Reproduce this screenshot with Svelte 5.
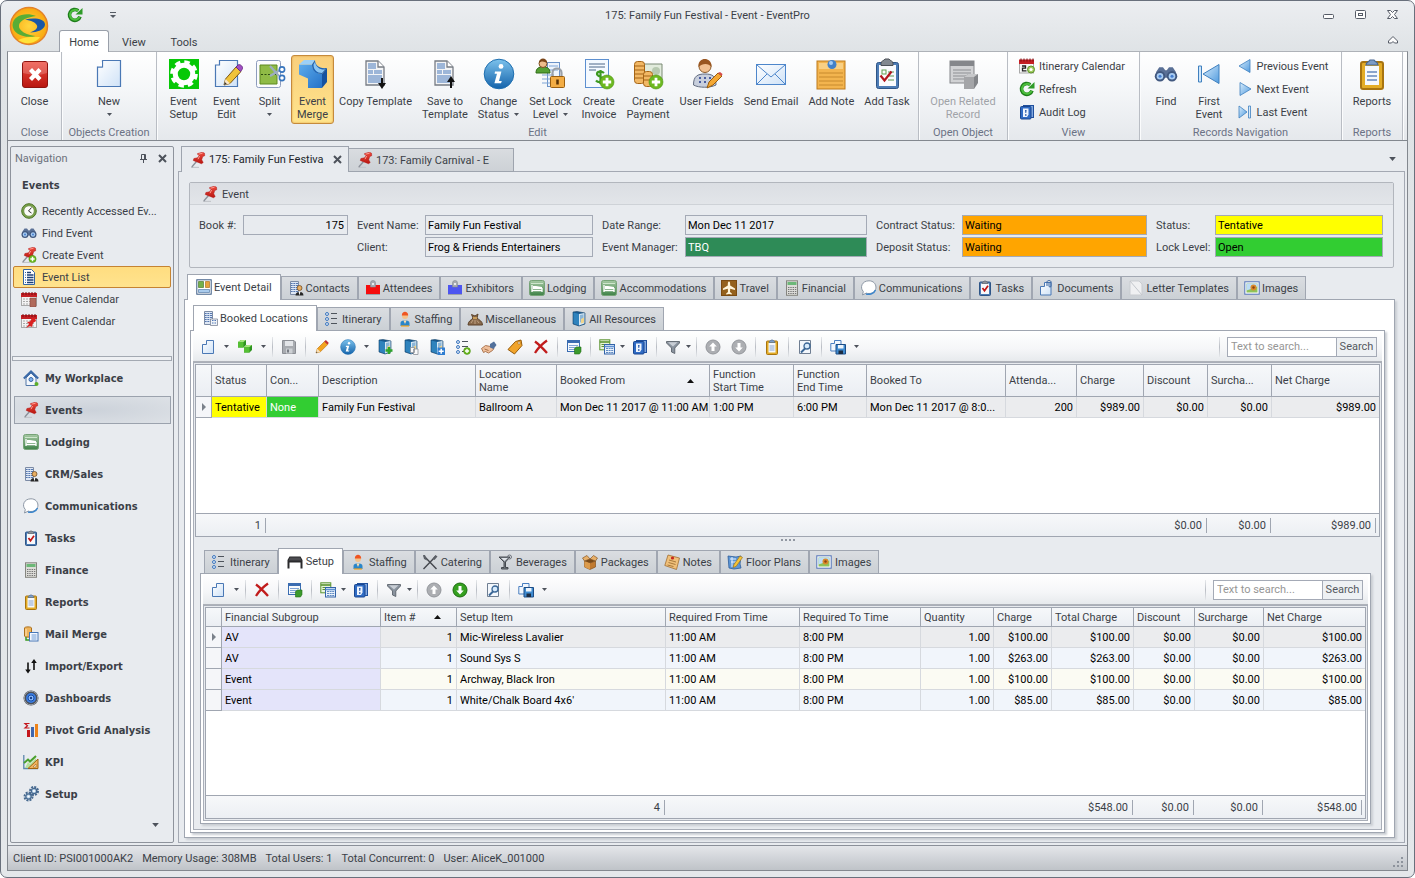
<script>
  const page = (x, y, w, h) =>
    `<path d="M${x + 4} ${y}H${x + w}V${y + h}H${x}V${y + 4}H${x + 4}Z" fill="url(#g-paper)" stroke="#4a78b5"/>`;
  const plus = (x, y, r, c = '#6cb820') =>
    `<circle cx="${x}" cy="${y}" r="${r}" fill="${c}" stroke="#4c9412" stroke-width=".6"/><path d="M${x - r * 0.6} ${y}H${x + r * 0.6}M${x} ${y - r * 0.6}V${y + r * 0.6}" stroke="#fff" stroke-width="${r * 0.4}"/>`;
  const pin =
    '<path d="M1 15.500h8" stroke="#c3c6cb" stroke-width="1.400"/><path d="M6.500 9.500L1.800 15" stroke="#8b9099" stroke-width="1.300"/><path d="M7.500 1.600l5-1.400 2 1 .2 2.500-2 .8-1 3.300 1.500 2.700-1.700 1.200-8.200-3.200.6-2 3.600-.7 1.800-2.600-1.500-.5z" fill="url(#g-red)" stroke="#b01212" stroke-width=".5"/><path d="M8.500 2.200l4-1M9.600 4L8 7.200" stroke="#ff9c90" fill="none"/>';
  const calendar =
    '<rect x=".5" y="2.500" width="15" height="12" fill="#f3f3f3" stroke="#a9a9a9"/><path d="M0 2h16v4H0z" fill="#c41f24"/><path d="M2 1v3M5 1v3M8 1v3M11 1v3M14 1v3" stroke="#7a0d10"/><path d="M2 8h12M2 10.500h12M2 13h12" stroke="#aaa" stroke-dasharray="2 1"/>';
  const book =
    '<path d="M2 1l4-.5 8 1.500v11l-6 2-6-2z" fill="#1b5c92" stroke="#0f3f68" stroke-width=".6"/><path d="M2.500 1.500L8 3v11.500L2.500 12.500z" fill="#2f83bd"/><path d="M8 3l5.500-1v10.500L8 14.500z" fill="#d9e8f3"/><path d="M9 4l3.500-.8v4L9 12z" fill="#8bb6d8"/><path d="M10 8l3-1.500v5L10 12.500z" fill="#f0d48a"/>';
  const bullets =
    '<g fill="#dbe8f7" stroke="#3f78bf"><circle cx="3" cy="3" r="1.500"/><circle cx="3" cy="8" r="1.500"/><circle cx="3" cy="13" r="1.500"/></g><path d="M7 2.500h6M7 7.500h6M7 12.500h6" stroke="#4e545c"/>';
  const tower =
    '<path d="M2.500 1.500h8v13h-8z" fill="#dfe8f5" stroke="#7c8ba5"/><path d="M3 3.500h7M3 5.500h7M3 7.500h7M3 9.500h7M3 11.500h7" stroke="#5577b0"/><path d="M5 2v12M7.500 2v12" stroke="#dfe8f5" stroke-width=".7"/>';
  const clip =
    '<rect x="2.500" y="2" width="11" height="13.500" rx="1" fill="#e3ac26" stroke="#a87410"/><rect x="4.500" y="4" width="7" height="9.500" fill="#f5f8fc"/><path d="M5.500 7h5M5.500 9h5M5.500 11h5" stroke="#8aa4cc"/><path d="M5 3.500c0-1.500 1.500-1.500 2-2.500h2c.5 1 2 1 2 2.500z" fill="#7c9cc6" stroke="#49678f" stroke-width=".6"/>';
  const task =
    '<rect x="2.500" y="2" width="11" height="13.500" rx="1" fill="#4d7cb5" stroke="#2e5587"/><rect x="4" y="3.500" width="8" height="10.500" fill="#f8f9fb"/><path d="M5.500 8l2 2.800 3.500-5" fill="none" stroke="#c01616" stroke-width="1.700"/><path d="M5 3.500c0-1.500 1.500-1.500 2-2.500h2c.5 1 2 1 2 2.500z" fill="#8d929a" stroke="#565c65" stroke-width=".6"/>';
  const binoculars =
    '<path d="M1.500 6.500l2-3h2.500l1.500 2h1l1.500-2h2.500l2 3v4h-13z" fill="#5a7096"/><circle cx="4" cy="9.500" r="3.500" fill="#41587f"/><circle cx="12" cy="9.500" r="3.500" fill="#41587f"/><circle cx="4" cy="9.500" r="2.200" fill="#a9cdf3"/><circle cx="12" cy="9.500" r="2.200" fill="#a9cdf3"/><circle cx="4" cy="9.500" r="1" fill="#477fd0"/><circle cx="12" cy="9.500" r="1" fill="#477fd0"/>';
  const tableSheet = (c) =>
    `<rect x="1.500" y="1.500" width="12" height="11" fill="#f6f9fd" stroke="${c}"/><path d="M1 1h13v3H1z" fill="${c}"/><path d="M3 6.500h9M3 8.500h9M3 10.500h9" stroke="#7fa3d4"/>`;
  const badge = (c) =>
    `<path d="M1 5h14v9H1z" fill="${c}"/><path d="M1 14.500h14" stroke="#9da2aa"/><path d="M5.500 7V3a2.500 2.500 0 015 0v4z" fill="#a7abb2" stroke="#858b94" stroke-width=".6"/><circle cx="8" cy="4" r="1" fill="#fff"/>`;
  const bed =
    '<rect x=".5" y=".5" width="15" height="15" rx="2" fill="url(#g-bed)" stroke="#76a377"/><path d="M3 5v7M3 10.500h10M13 8v4" stroke="#fff" stroke-width="1.300"/><path d="M4 6h3l6 1v2H4z" fill="#fff"/><path d="M2 3.500h12" stroke="#cfe6cd"/>';
  const arrow = (d, a, b) =>
    `<circle cx="8" cy="8" r="7" fill="${a}" stroke="${b}"/><path d="${d}" fill="#fff"/>`;
  const up = 'M8 3.500l3.800 4h-2.300v4.500h-3V7.500H4.200z';
  const down = 'M8 12.500l3.800-4h-2.300V4h-3v4.500H4.200z';
  const info =
    '<circle cx="8" cy="8" r="7.400" fill="url(#g-info)" stroke="#1f6fb0" stroke-width=".5"/><circle cx="9" cy="4.200" r="1.200" fill="#fff"/><path d="M6 6.800h3.200L8 11.500h1.400l-.4 1.100H5.700l1.300-4.700H5.800z" fill="#fff"/>';
  const funnel =
    '<path d="M1.500 2.500h13v1.500L9.800 9v5.500L6.500 13V9L1.500 4z" fill="#8b949f" stroke="#505861" stroke-width=".8"/><path d="M3 3.300h9.500L8 7.500z" fill="#c9ced5"/>';
  const audit =
    '<rect x="4.500" y="1.500" width="10" height="12" fill="#7fa7e0" stroke="#1f4f9d"/><rect x="1.500" y="2.500" width="10.500" height="12.500" rx="1" fill="#2f6bc4" stroke="#1a4790"/><path d="M4 4.500h5.500v6L8 13H4z" fill="#eef4fd"/><path d="M6 6h1.600l-.4 3h-.8zM6 10.200h1.500v1.500H6z" fill="#2457a8"/>';
  const refresh =
    '<path d="M13 9.600A5.400 5.400 0 1111.200 3.700" fill="none" stroke="#1d7d1a" stroke-width="3.600"/><path d="M12.600 9.800A5 5 0 1111.200 4" fill="none" stroke="#4cbf3c" stroke-width="2"/><path d="M15.500 1v6.500H8.500z" fill="#2e9b28"/>';
  const picture =
    '<rect x=".8" y="1.800" width="14.400" height="12.400" fill="#fff" stroke="#5273b8"/><path d="M2.500 3.500h11v9h-11z" fill="#8fc35a"/><path d="M2.500 3.500h11v3l-5 2-6 2z" fill="#bcdcf7"/><circle cx="9.500" cy="7.500" r="3" fill="#d98a2b"/><circle cx="9.500" cy="7.500" r="1.200" fill="#8a4312"/>';
  const person =
    '<circle cx="8" cy="5" r="3" fill="#f4c28a"/><path d="M4.800 4.500c0-5 6.400-5 6.400 0z" fill="#ef5522"/><path d="M3.500 15v-3c0-2 2-2.500 4.500-2.500s4.500.5 4.500 2.500v3z" fill="#2a86c9"/><path d="M6.500 9.500h3L8 13z" fill="#ffe0b0"/><path d="M4 15h8" stroke="#f8a51b" stroke-width="1.200"/>';
  const pencil =
    '<path d="M2 14l1.200-4.200L10.500 2.500l3.200 3L6.400 12.800z" fill="#f3a41f" stroke="#b96e0d" stroke-width=".6"/><path d="M10.300 2.600l1.600-1.500 3 2.900-1.500 1.500z" fill="#c33333"/><path d="M3.200 9.800l3.200 3L2 14z" fill="#f6dfb8"/><path d="M2 14l.5-1.500 1 1z" fill="#333"/>';
  const gear =
    '<g fill="none" stroke="#46698f"><circle cx="5.500" cy="10.500" r="4" stroke-width="2" stroke-dasharray="2 1.100"/><circle cx="5.500" cy="10.500" r="2.700" fill="#b7cfe6" stroke-width="1.200"/><circle cx="11" cy="5" r="4" stroke-width="2" stroke-dasharray="2 1.100"/><circle cx="11" cy="5" r="2.700" fill="#b7cfe6" stroke-width="1.200"/></g><circle cx="5.500" cy="10.500" r="1.100" fill="#fff"/><circle cx="11" cy="5" r="1.100" fill="#fff"/>';
  const cube = (x, y) =>
    `<path d="M${x} ${y + 2}l3-2h5v5l-2.500 2.500H${x}z" fill="#2e9420"/><path d="M${x} ${y + 2}l3-2h5l-2.500 2z" fill="#a6e57f"/><path d="M${x} ${y + 2}h5.500v5.500H${x}z" fill="#55bf34"/>`;

  const icons = {
    pin,
    clock: '<circle cx="8" cy="8" r="7.300" fill="#7ba34c" stroke="#4d7426"/><circle cx="8" cy="8" r="5.200" fill="#fbfcf8" stroke="#5a7f34" stroke-width=".6"/><path d="M10.500 4.500L7.500 8l3 2" fill="none" stroke="#333"/>',
    binoculars,
    pinAdd: pin + plus(11.5, 12, 3.6),
    list: '<path d="M2.500.5h8l3 3v12h-11z" fill="#fff" stroke="#3465a4"/><path d="M4 3.500h1M4 6h1M4 8.500h1M4 11h1M4 13.500h1" stroke="#3465a4"/><path d="M6 3.500h4M6 6h6.500M6 8.500h6.500M6 11h6.500M6 13.500h6.500" stroke="#1c3f77" stroke-width="1.300"/>',
    calVenue: calendar + '<path d="M9 7h6v9H9z" fill="#b06a5c" stroke="#7d4338" stroke-width=".5"/>',
    calEvent: calendar + '<path d="M5 15l3-4-2-2 3-.5 2-3.500h3l1 3-3 2-1 4-2-1z" fill="#d92020"/>',
    home: '<path d="M3 8v7.500h10V8L8 3z" fill="#f3f7fc" stroke="#5277a8"/><path d="M.8 8.500L8 1.500l7.200 7" fill="none" stroke="#3b6aa8" stroke-width="2"/><circle cx="8" cy="9.500" r="2" fill="#7db2ee" stroke="#3866a6"/><circle cx="13.500" cy="14" r="2" fill="#5eaf2a"/>',
    bed,
    crm: tower + '<circle cx="11.500" cy="8" r="2.500" fill="#e8ae62" stroke="#664018" stroke-width=".7"/><path d="M7.500 15.500c0-5 8-5 8 0z" fill="#262626"/><path d="M10.500 11.500h2l-1 4z" fill="#fff"/>',
    chat: '<path d="M8 .8c9 0 9.500 12.700 0 12.700-1 0-2 0-2.800-.4L1.500 15l.8-3.500C-1.500 7.500 1 .8 8 .8z" fill="#fff" stroke="#8d97a5"/><path d="M5 14c3.500.8 8-.2 9.500-4" fill="none" stroke="#3c86cc" stroke-width="1.500"/>',
    task,
    calc: '<rect x="2.500" y=".8" width="11" height="14.500" fill="#dcdcd8" stroke="#85857f"/><path d="M3.500 2h9v3h-9z" fill="#6cb878"/><path d="M4 7.500h8.500M4 9.500h8.500M4 11.500h8.500M4 13.500h8.500" stroke="#777" stroke-dasharray="1.400 .9"/>',
    clip,
    mailMerge: '<path d="M1.500 2c0-1.500 7-1.500 7 0v8c0 1.500-7 1.500-7 0z" fill="#efb45c" stroke="#ad701c"/><path d="M3 3v7" stroke="#fde6bc"/><rect x="6.500" y="6.500" width="8.500" height="8.500" fill="#f5f9ff" stroke="#4878b8"/><path d="M8.500 9h5M8.500 11h5M8.500 13h5" stroke="#6f9bd3"/><path d="M3 11v3h3" stroke="#389b22" fill="none" stroke-width="1.500"/>',
    importExport: '<path d="M5 4.500v9M11 12V3" stroke="#111" stroke-width="1.600"/><path d="M2.200 11.500h5.600L5 15.500zM8.200 5h5.600L11 1z" fill="#111"/>',
    dashboard: '<circle cx="8" cy="8" r="7.500" fill="#4c5057"/><circle cx="8" cy="8" r="6.800" fill="none" stroke="#9fa4ad"/><circle cx="8" cy="8" r="5" fill="#3a7be0"/><circle cx="8" cy="8" r="3" fill="#8cbcff" stroke="#194fa5"/><circle cx="8" cy="8" r="1.200" fill="#17418f"/>',
    pivot: '<path d="M6.500 1.500H2l2.500 2.200L2 6h4.500" fill="none" stroke="#c4161c" stroke-width="1.200"/><path d="M4 8h3v7H4z" fill="#c4161c"/><path d="M8 5h3v10H8z" fill="#3f66ad"/><path d="M12 2h3v13h-3z" fill="#ee8319"/>',
    kpi: '<path d="M.8 1v13.500H15" stroke="#5d88ad" fill="none" stroke-width="1.300"/><path d="M1 9l4-3.500 2 2L13 2" stroke="#49a02b" stroke-width="2" fill="none"/><path d="M2 14l3-6 2 2 6-6v10z" fill="#b6e09a"/><path d="M5 14.500L15 5v9.500z" fill="#efb35f" stroke="#9f6410"/><path d="M10 13l3-3v3z" fill="#fff" stroke="#9f6410" stroke-width=".6"/>',
    gear,
    detail: '<rect x=".8" y=".8" width="14.400" height="14.400" fill="#fff" stroke="#3a5a84"/><path d="M2.500 2.500h5v6h-5z" fill="#74b04a" stroke="#3b6d1f" stroke-width=".6"/><path d="M9.500 2.500h4v6h-4z" fill="#e7a23a" stroke="#a2600f" stroke-width=".6"/><path d="M2.500 10.500h11v3h-11z" fill="#a9cbed" stroke="#41699b" stroke-width=".6"/>',
    badgeRed: badge('#f60d0d'),
    badgeBlue: badge('#4d55f0'),
    plane: '<rect width="16" height="16" fill="#7a4b12"/><path d="M1 1h14v14H1z" fill="#94611d"/><path d="M8 1.500c1 0 1.200 1.500 1.200 4L14 8.500V10l-4.800-1.300L9 12l1.800 1.500v1L8 14l-2.800.5v-1L7 12l-.2-3.300L2 10V8.500l4.800-3c0-2.500.2-4 1.200-4z" fill="#fff6dc"/>',
    documents: page(1.5, 2.5, 10.5, 12.5) + '<path d="M8 6V2c0-2 4-2 4 0v4c0 1.500-2 1.500-2 0V2.500" fill="none" stroke="#35619e"/>',
    letter: '<path d="M2 1h9l3 3v11H2z" fill="#eff0f2" stroke="#c9ccd1"/><path d="M2 1l12 14" stroke="#c3c7cd"/>',
    image: picture,
    building: tower + '<path d="M8.500 9h7v6.500h-7z" fill="#f0f3f7" stroke="#7e8799" stroke-width=".8"/><path d="M10 10.500h4.500M10 13h4.500" stroke="#4d75b7" stroke-dasharray="1.500 1"/>',
    bullets,
    person,
    bag: '<path d="M1 14c0-4 3.500-5 5-7L4.500 3.500 8 5l3-2-1 4c2 2 5.500 3 5.500 7z" fill="#8a6b4c" stroke="#5c432b"/><path d="M4 12l2-3M8 13V9M12 12l-2-2.500" stroke="#bfa183"/><path d="M6 7h4" stroke="#e0b060" stroke-width="1.500"/>',
    book,
    page: page(2.5, 1.5, 11, 13),
    cubes: cube(1, 1) + cube(7, 6),
    save: '<path d="M1.500 1.500h11.500l1.500 1.500v11.500h-13z" fill="#a8abb0" stroke="#8b8e94"/><path d="M4 2h8v5H4z" fill="#e3e5e8"/><path d="M5 9.500h6.500v5H5z" fill="#cdd0d4"/><path d="M6 10.500h2v3H6z" fill="#777b82"/>',
    pencil,
    info,
    bookAdd: book + '<path d="M8.500 11.500h7M12 8v7" stroke="#2fa52b" stroke-width="2.600"/>',
    bookCopy: book + '<path d="M7.500 8.500h4v5h-4zM10.500 10h4.500v5.500h-4.500z" fill="#fafafa" stroke="#8a8f98" stroke-width=".8"/>',
    bookPlus: book + '<rect x="8.500" y="8.500" width="7.500" height="7.500" fill="#2e7dd1"/><path d="M9.700 12.200h5M12.200 9.700v5" stroke="#fff" stroke-width="1.500"/>',
    bulletsAdd: bullets + plus(12, 12, 3.4),
    hands: '<path d="M.5 9.500l4-3 5 1 3.500 2-1.500 2-4 2.500-3-1.500-2 1z" fill="#f0c09c" stroke="#9a6038" stroke-width=".8"/><path d="M9 5l4-2.500 2.500 3.500-3 4-3.500-1.500z" fill="#52719c"/><path d="M3.500 10l4 1.500" stroke="#a36b43"/>',
    tag: '<path d="M1 10.500L8.500 2.500l5.500-1.500 1 5.500L7.500 15z" fill="#f1a42b" stroke="#965b0a"/><circle cx="12" cy="4" r="1.200" fill="#fff" stroke="#965b0a" stroke-width=".6"/>',
    remove: '<path d="M2 2.500c4 3 8 7 12 11.500M14 1.500C9 5 5 9 2 14" fill="none" stroke="#c11c1c" stroke-width="2.300"/>',
    tableGreen: tableSheet('#3a6cb1') + '<path d="M8.500 9.500l2-1.500H15v4.500L13.500 15h-5z" fill="#3b9a2c" stroke="#246e18" stroke-width=".6"/>',
    sheets: '<rect x=".8" y=".8" width="10" height="10" fill="#e8f3dc" stroke="#5b9431"/><path d="M.8 3h10" stroke="#5b9431" stroke-width="1.600"/><path d="M2.500 5.500H5M2.500 7.500H5" stroke="#5b9431"/><rect x="5.500" y="5.500" width="10" height="9.500" fill="#eaf2fc" stroke="#3263a8"/><path d="M5.500 7.500h10" stroke="#5d8fd3" stroke-width="1.600"/><path d="M7 9.500h7.500M7 11.500h7.500M7 13.500h7.500" stroke="#5f8ac2" stroke-dasharray="2 .6"/>',
    audit,
    funnel,
    upGrey: arrow(up, '#acaeb2', '#93969b'),
    downGrey: arrow(down, '#acaeb2', '#93969b'),
    downGreen: arrow(down, '#35a020', '#1c6d10'),
    preview: '<path d="M2.500 1.500h11v13h-11z" fill="#f3f7fc" stroke="#6f7e92"/><circle cx="10" cy="7" r="3" fill="#d8ebfc" stroke="#3b6797" stroke-width="1.300"/><path d="M8 9.500l-4 4" stroke="#3b6797" stroke-width="2"/>',
    exportIt: '<path d="M4.500 1.500H11V12H.8V4.500h3.700z" fill="#f2f7fd" stroke="#4a7fc0"/><path d="M6 5.500h9.500v9.500H6z" fill="#3f8bd0" stroke="#1d4d86"/><path d="M8 6h5.500v3.500H8z" fill="#eef5fc"/><path d="M8.500 11.500H13V15H8.500z" fill="#1c2d44"/>',
    furniture: '<path d="M2.500 3.500h11l2 3.500v8.500h-2v-6h-11v6h-2V7z" fill="#2a2a2c"/><path d="M3 4.500h10l1.500 3H1.500z" fill="#4c4c50"/>',
    catering: '<path d="M2 2l12.500 13M14 2L1.500 15" stroke="#45484e" stroke-width="1.400"/><path d="M1 1l1 4 3 1.500L3 1zM15.500 2.500l-3 3.500-2-1.500L13.500 1z" fill="#5c6067"/>',
    beverage: '<path d="M2 3h11L8.500 8v5.500h2.500V15H4.500v-1.500H7V8z" fill="#7e848c" stroke="#3a3e44" stroke-width=".9"/><path d="M4 4h7L7.500 7z" fill="#dfe3e8"/><circle cx="12.500" cy="3" r="2" fill="none" stroke="#6d737c"/>',
    box: '<path d="M2.500 7L8 9l5.500-2v6L8 15.500 2.500 13z" fill="#c07a30" stroke="#7a4711" stroke-width=".6"/><path d="M2.500 7L8 9v6.500L2.500 13z" fill="#dc9b4c"/><path d="M8 5L5 1.500.5 4 2.500 7zM8 5l3.500-3.500L15.500 4l-2 3z" fill="#e7b06a" stroke="#7a4711" stroke-width=".6"/><path d="M2.500 7L8 5l5.500 2L8 9z" fill="#7b4a17"/>',
    note: '<path d="M4 1l11.500 3-3 11.500L.8 11.500z" fill="#f0c07a" stroke="#996322" stroke-width=".7"/><path d="M5 6l7 2M4.500 8.500l7 2M3.500 11l6 1.500" stroke="#a87a3c"/><circle cx="8.500" cy="4" r="1.600" fill="#c8271c"/>',
    floor: '<path d="M1 2l8 1 5-1-1 8 1 4-7 1-5-1z" fill="#5e97d6" stroke="#2b5c9b" stroke-width=".8"/><path d="M3 5h6M4 8h5M5 3v10" stroke="#e3effc"/><path d="M6 13.500l1-3L13 2l2.500 1.500-6.500 9z" fill="#f5c43a" stroke="#9a6d0c" stroke-width=".6"/>',
    refresh,
    calItin: '<rect x=".5" y="2.500" width="14" height="12.500" fill="#f6f6f6" stroke="#a9a9a9"/><path d="M0 1.500h15v4.500H0z" fill="#c41f24"/><path d="M2 .5v3M5 .5v3M8 .5v3M11 .5v3M14 .5v3" stroke="#7a0d10"/><path d="M3 8h3.500v2.200H3.500v2.600H7.500" fill="none" stroke="#222" stroke-width="1.300"/><circle cx="12" cy="11.500" r="3.500" fill="#a2cc62" stroke="#5e932a"/><circle cx="12" cy="11.500" r="1.600" fill="#fff"/>',
    prev: '<path d="M13 1.500v13L2 8z" fill="url(#g-sky)" stroke="#3f80bf" stroke-width=".8"/>',
    next: '<path d="M3 1.500v13L14 8z" fill="url(#g-sky)" stroke="#3f80bf" stroke-width=".8"/>',
    last: '<path d="M2 2v12l8-6z" fill="url(#g-sky)" stroke="#3f80bf" stroke-width=".8"/><path d="M11.500 2h2v12h-2z" fill="#d5e9fb" stroke="#3f80bf" stroke-width=".8"/>',
  };

  const sheet = (x, y) =>
    `<path d="M${x} ${y}h12l6 6v18h-18z" fill="#f3f4f6" stroke="#777c84" stroke-width="1.300"/><path d="M${x + 12} ${y}v6h6" fill="#fff" stroke="#777c84" stroke-width="1.300"/><path d="M${x + 2} ${y + 2}h8v6h-8zM${x + 2} ${y + 9}h5v4h-5zM${x + 8} ${y + 9}h8v4h-8zM${x + 2} ${y + 14}h14v8h-14z" fill="#9db6d8"/>`;
  const dollar =
    '<path d="M21 15c-2-2-7-2-7 1s7 2.500 7 5.500-6 3.500-8 1M17.500 12v14" fill="none" stroke="#3d9a22" stroke-width="2.200"/>';
  const big = {
    close: '<rect x="3.500" y="3.500" width="25" height="26" rx="2.500" fill="url(#g-red)" stroke="#8e1410"/><path d="M4 4h24v11c-8 3-16 2-24 0z" fill="#fff" opacity=".2"/><path d="M11.500 11.500l9.500 10M21 11.500l-9.500 10" stroke="#fff" stroke-width="4.200"/>',
    page: '<path d="M9.500 2.500h18v26h-23V9h5z" fill="url(#g-paper)" stroke="#4a78b5" stroke-width="1.200"/><path d="M9.500 2.500V9h-5" fill="#fff" stroke="#4a78b5"/>',
    setup: '<path d="M1 1h30v30H1z" fill="#06c806"/><circle cx="16" cy="16" r="12" fill="none" stroke="#fff" stroke-width="3.600" stroke-dasharray="5.400 4.020"/><circle cx="16" cy="16" r="8.700" fill="none" stroke="#fff" stroke-width="5"/>',
    edit: '<path d="M8.500 2.500h18v26h-22V7h4z" fill="url(#g-paper)" stroke="#4a78b5" stroke-width="1.200"/><path d="M13 27l1.500-6L25 9l5 4.500L19 25.500z" fill="#f0c33a" stroke="#7e5712"/><path d="M25 9l2-2c2-1.500 6 2 4 4.500l-1.500 2z" fill="#a14ec2" stroke="#6b2d88"/><path d="M13 27l1.500-6 4.500 4.500z" fill="#f9e6c5"/><path d="M13 27l.8-3 2 2z" fill="#333"/>',
    split: '<rect x="2.500" y="2.500" width="24" height="27" rx="2" fill="#fbfcfd" stroke="#8d9cbd"/><path d="M6 7h17v19H6z" fill="#8fbb46" stroke="#5e8a21"/><path d="M7 16.500h15" stroke="#2c4e10" stroke-dasharray="2 1.500"/><path d="M16 8l9 10M16 18l10-6" stroke="#9cadc0" stroke-width="2.200"/><circle cx="28" cy="11.500" r="2.600" fill="#fff" stroke="#3775bd" stroke-width="1.600"/><circle cx="28" cy="20" r="2.600" fill="#fff" stroke="#3775bd" stroke-width="1.600"/>',
    merge: '<path d="M2 6.500h13c0 5 3 9 10 9.500v14H11v-9.500L2 16.500z" fill="url(#g-blue)"/><path d="M2 6.500L7 2h11l-3 4.500z" fill="#9bd0f8"/><path d="M15 6.500L18 2c0 5 4 9 12 8l-5 6c-7 0-10-4-10-9.500z" fill="#1e63b5"/><path d="M16.500 6.500L18 4c1 5 5 8 10 7.500L25 15c-5 0-8.500-3-8.500-8.500z" fill="#8cc6f3"/><path d="M25 16l5-6v14l-5 6z" fill="#1552a0"/>',
    copy: sheet(6, 3) + '<path d="M22 20v7" stroke="#111" stroke-width="2"/><path d="M18 25h8l-4 6z" fill="#111"/>',
    saveTo: sheet(6, 3) + '<path d="M22 22v8" stroke="#111" stroke-width="2"/><path d="M18 24h8l-4-6z" fill="#111"/>',
    info: `<g transform="scale(2)">${info}</g>`,
    lock: '<rect x="13.500" y="4.500" width="12" height="24" fill="#eef4fc" stroke="#6c93c8"/><path d="M15 8h9M15 12h9M8 17h12M8 21h12M8 25h12" stroke="#7fa5d6"/><path d="M2 15c0-5 3-6 7-6s7 1 7 6z" fill="#55a035" stroke="#2f6c18"/><circle cx="9" cy="5.500" r="4" fill="#edbd8b" stroke="#7e4d20"/><path d="M5 5c0-6 8-6 8 0-3-2-6-2-8 0z" fill="#7a4519"/><path d="M18.500 19v-4c0-6 9-6 9 0v4" fill="none" stroke="#9aa0a8" stroke-width="2.200"/><rect x="16.500" y="18.500" width="14" height="11" rx="1" fill="#f3ad45" stroke="#9a5f10"/><path d="M23.500 21.500v5" stroke="#5b3305" stroke-width="2.500"/>',
    invoice: '<rect x="2.500" y="1.500" width="23" height="28" fill="#f4f9ff" stroke="#5c8fd0"/><path d="M6 6h16M6 9h16M6 12h7" stroke="#4d6688"/>' + dollar + plus(24, 24, 7),
    payment: '<path d="M12 6h18v16H12z" fill="#e1ebdc" stroke="#7b8a74"/><circle cx="24" cy="13" r="4" fill="#b7c9b0"/><g fill="#f2b865" stroke="#a56416"><rect x="2.500" y="3.500" width="10" height="22" rx="3"/><path d="M2.500 8h10M2.500 12h10M2.500 16h10M2.500 20h10"/><rect x="11.500" y="13.500" width="9" height="15" rx="3"/><path d="M11.500 18h9M11.500 22h9"/></g>' + plus(24, 24, 7),
    user: '<circle cx="14" cy="8.500" r="6" fill="#f2c091" stroke="#8a5a2a"/><path d="M7.500 9c-1-11 14-10 13 0-3-4-9-4-13 0z" fill="#9a5620"/><path d="M2.500 27c0-9 4-11 11.500-11s11 2 11 11c-6 3-17 3-22.500 0z" fill="#c8cfdd" stroke="#626c80"/><path d="M8 20h12M8 24h12" stroke="#4a5da0" stroke-width="2" stroke-dasharray="2 3"/><path d="M16 30l2-6 9-9 4 3-9 9z" fill="#f5a833" stroke="#9a5c0d"/><path d="M27 15l2-1 2.500 2-.8 2z" fill="#d54848"/>',
    mail: '<rect x="1.500" y="6.500" width="29" height="20" fill="url(#g-paper)" stroke="#4d86cb"/><path d="M2 7l14 12L30 7M2 26l10-10M30 26L20 16" fill="none" stroke="#4d86cb"/>',
    note: '<rect x="2" y="3" width="28" height="28" fill="#f3b44e" stroke="#bd7a1c"/><path d="M4 5h24v6H4z" fill="#f9d084"/><path d="M4 15h24M4 19h24M4 23h24M4 27h24" stroke="#c88a2c"/><circle cx="17" cy="6.500" r="4.500" fill="#4381c8"/><circle cx="16" cy="5" r="2" fill="#a4ccf5"/>',
    task: '<rect x="5.500" y="4.500" width="22" height="26" rx="2" fill="#4d7cb5" stroke="#2e5587"/><path d="M8 7h17v21H8z" fill="#fafbfd"/><path d="M10 5.500c0-3 3-2.500 4-4.500h4c1 2 4 1.500 4 4.500v2H10z" fill="#82888f" stroke="#4c5158"/><path d="M17 14h6M18 18h5M17 22h6" stroke="#5b9651"/><rect x="11" y="12" width="4" height="4" fill="none" stroke="#61a050"/><path d="M9.500 17.500l4 5 7-9" fill="none" stroke="#b2151d" stroke-width="2.200"/>',
    related: '<rect x="3" y="3" width="24" height="22" fill="#d1d2d4" stroke="#84868a"/><path d="M3 3h24v5H3z" fill="#85878b"/><path d="M6 12h18M6 15h18M6 18h18M6 21h12" stroke="#8d8f93"/><path d="M17 19l4-3h10v9l-4 6H17z" fill="#838589"/><path d="M17 19l4-3h10l-4 3z" fill="#c7c8ca"/><path d="M17 19h10v12H17z" fill="#a4a5a8"/>',
    find: `<g transform="translate(4 4) scale(1.500)">${binoculars}</g>`,
    first: '<path d="M5.500 8h3v16h-3z" fill="#cfe6fa" stroke="#3f80bf"/><path d="M26 6.500v19L10 16z" fill="url(#g-sky)" stroke="#3f80bf"/>',
    reports: `<g transform="scale(2)">${clip}</g>`,
  };

  const editButtons = [
    ['setup', 'Event', 'Setup'],
    ['edit', 'Event', 'Edit'],
    ['split', 'Split', '', true],
    ['merge', 'Event', 'Merge', false, true],
    ['copy', 'Copy Template'],
    ['saveTo', 'Save to', 'Template'],
    ['info', 'Change', 'Status', true],
    ['lock', 'Set Lock', 'Level', true],
    ['invoice', 'Create', 'Invoice'],
    ['payment', 'Create', 'Payment'],
    ['user', 'User Fields'],
    ['mail', 'Send Email'],
    ['note', 'Add Note'],
    ['task', 'Add Task'],
  ];

  const shortcuts = [
    ['clock', 'Recently Accessed Ev...'],
    ['binoculars', 'Find Event'],
    ['pinAdd', 'Create Event'],
    ['list', 'Event List'],
    ['calVenue', 'Venue Calendar'],
    ['calEvent', 'Event Calendar'],
  ];
  const modules = [
    ['home', 'My Workplace'],
    ['pin', 'Events'],
    ['bed', 'Lodging'],
    ['crm', 'CRM/Sales'],
    ['chat', 'Communications'],
    ['task', 'Tasks'],
    ['calc', 'Finance'],
    ['clip', 'Reports'],
    ['mailMerge', 'Mail Merge'],
    ['importExport', 'Import/Export'],
    ['dashboard', 'Dashboards'],
    ['pivot', 'Pivot Grid Analysis'],
    ['kpi', 'KPI'],
    ['gear', 'Setup'],
  ];

  const detailTabs = [
    ['detail', 'Event Detail'],
    ['crm', 'Contacts'],
    ['badgeRed', 'Attendees'],
    ['badgeBlue', 'Exhibitors'],
    ['bed', 'Lodging'],
    ['bed', 'Accommodations'],
    ['plane', 'Travel'],
    ['calc', 'Financial'],
    ['chat', 'Communications'],
    ['task', 'Tasks'],
    ['documents', 'Documents'],
    ['letter', 'Letter Templates'],
    ['image', 'Images'],
  ];
  const locationTabs = [
    ['building', 'Booked Locations'],
    ['bullets', 'Itinerary'],
    ['person', 'Staffing'],
    ['bag', 'Miscellaneous'],
    ['book', 'All Resources'],
  ];
  const setupTabs = [
    ['bullets', 'Itinerary'],
    ['furniture', 'Setup'],
    ['person', 'Staffing'],
    ['catering', 'Catering'],
    ['beverage', 'Beverages'],
    ['box', 'Packages'],
    ['note', 'Notes'],
    ['floor', 'Floor Plans'],
    ['image', 'Images'],
  ];

  // '|' is a separator, 'v' a drop-down arrow, '.' a narrow drop-down arrow
  const locationTools = ['page', 'v', 'cubes', 'v', '|', 'save', '|', 'pencil', 'info', 'v', 'bookAdd', 'bookCopy', 'bookPlus', 'bulletsAdd', 'hands', 'tag', 'remove', '|', 'tableGreen', '|', 'sheets', '.', 'audit', '|', 'funnel', '.', '|', 'upGrey', 'downGrey', '|', 'clip', '|', 'preview', '|', 'exportIt', 'v'];
  const setupTools = ['page', 'v', '|', 'remove', '|', 'tableGreen', '|', 'sheets', '.', 'audit', '|', 'funnel', '.', '|', 'upGrey', 'downGreen', '|', 'preview', '|', 'exportIt', 'v'];

  const fields = [
    { label: 'Book #:', value: '175', tone: 'num' },
    { label: 'Event Name:', value: 'Family Fun Festival' },
    { label: 'Date Range:', value: 'Mon Dec 11 2017' },
    { label: 'Contract Status:', value: 'Waiting', tone: 'orange' },
    { label: 'Status:', value: 'Tentative', tone: 'yellow' },
    {},
    { label: 'Client:', value: 'Frog & Friends Entertainers' },
    { label: 'Event Manager:', value: 'TBQ', tone: 'teal' },
    { label: 'Deposit Status:', value: 'Waiting', tone: 'orange' },
    { label: 'Lock Level:', value: 'Open', tone: 'green' },
  ];

  // columns: title, width, right-aligned, sorted
  const locations = {
    name: 'Booked locations',
    cols: [
      ['Status', 55], ['Con...', 52], ['Description', 157], ['Location\nName', 81], ['Booked From', 153, false, true],
      ['Function\nStart Time', 84], ['Function\nEnd Time', 73], ['Booked To', 139], ['Attenda...', 71, true],
      ['Charge', 67, true], ['Discount', 64, true], ['Surcha...', 64, true], ['Net Charge', null, true],
    ],
    rows: [['Tentative', 'None', 'Family Fun Festival', 'Ballroom A', 'Mon Dec 11 2017 @ 11:00 AM', '1:00 PM', '6:00 PM', 'Mon Dec 11 2017 @ 8:0...', '200', '$989.00', '$0.00', '$0.00', '$989.00']],
    totals: ['1', '', '', '', '', '', '', '', '', '', '$0.00', '$0.00', '$989.00'],
    tones: ['yellow', 'green'],
  };
  const setup = {
    name: 'Setup items',
    cols: [
      ['Financial Subgroup', 159], ['Item #', 76, true, true], ['Setup Item', 209], ['Required From Time', 134],
      ['Required To Time', 121], ['Quantity', 73, true], ['Charge', 58, true], ['Total Charge', 82, true],
      ['Discount', 61, true], ['Surcharge', 69, true], ['Net Charge', null, true],
    ],
    rows: [
      ['AV', '1', 'Mic-Wireless Lavalier', '11:00 AM', '8:00 PM', '1.00', '$100.00', '$100.00', '$0.00', '$0.00', '$100.00'],
      ['AV', '1', 'Sound Sys S', '11:00 AM', '8:00 PM', '1.00', '$263.00', '$263.00', '$0.00', '$0.00', '$263.00'],
      ['Event', '1', 'Archway, Black Iron', '11:00 AM', '8:00 PM', '1.00', '$100.00', '$100.00', '$0.00', '$0.00', '$100.00'],
      ['Event', '1', "White/Chalk Board 4x6'", '11:00 AM', '8:00 PM', '1.00', '$85.00', '$85.00', '$0.00', '$0.00', '$85.00'],
    ],
    totals: ['', '', '4', '', '', '', '', '$548.00', '$0.00', '$0.00', '$548.00'],
    tones: ['lavender'],
  };
</script>

{#snippet icon(name)}
  <svg class="i16" viewBox="0 0 16 16" aria-hidden="true">{@html icons[name]}</svg>
{/snippet}

{#snippet caret()}
  <svg class="caret" viewBox="0 0 5 3" aria-hidden="true"><path d="M0 0h5L2.500 3z" fill="currentColor" /></svg>
{/snippet}

{#snippet bigButton(name, line1, line2, drop, on, disabled)}
  <button class="big" class:on {disabled}>
    <svg class="i32" viewBox="0 0 32 32" aria-hidden="true">{@html big[name]}</svg>
    <span>{line1}</span>
    {#if line2 || drop}<span class="second">{line2}{#if drop}{@render caret()}{/if}</span>{/if}
  </button>
{/snippet}

{#snippet smallButton(name, text)}
  <button class="small">{@render icon(name)}{text}</button>
{/snippet}

{#snippet tabs(items, active, label)}
  <div class="tabs" role="tablist" aria-label={label}>
    {#each items as [glyph, text]}
      <button class="tab" class:active={text === active} role="tab" aria-selected={text === active}>
        {@render icon(glyph)}{text}
      </button>
    {/each}
  </div>
{/snippet}

{#snippet toolbar(items, id)}
  <div class="toolbar">
    {#each items as item}
      {#if item === '|'}
        <span class="sep"></span>
      {:else if item === 'v' || item === '.'}
        <button class="drop" class:narrow={item === '.'} aria-label="More">{@render caret()}</button>
      {:else}
        <button class="tool" aria-label={item}>{@render icon(item)}</button>
      {/if}
    {/each}
    <span class="sep push"></span>
    <div class="search">
      <input {id} type="text" placeholder="Text to search..." aria-label="Search text" />
      <button>Search</button>
    </div>
  </div>
{/snippet}

{#snippet columns(cols)}
  <colgroup>
    <col class="marker" />
    {#each cols as [, width]}
      <col style:width={width ? `${width}px` : null} />
    {/each}
  </colgroup>
{/snippet}

{#snippet grid(data)}
  <table aria-label={data.name}>
    {@render columns(data.cols)}
    <thead>
      <tr>
        <th></th>
        {#each data.cols as [title, , , sorted]}
          <th><span class="head">{title}{#if sorted}<svg class="sort" viewBox="0 0 7 4" aria-hidden="true"><path d="M0 4h7L3.500 0z" /></svg>{/if}</span></th>
        {/each}
      </tr>
    </thead>
    <tbody>
      {#each data.rows as row, r}
        <tr>
          <td class="mark">{#if r === 0}<svg viewBox="0 0 4 8" aria-hidden="true"><path d="M0 0v8l4-4z" /></svg>{/if}</td>
          {#each row as value, c}
            <td class={[data.tones[c], data.cols[c][2] && 'num']}>{value}</td>
          {/each}
        </tr>
      {/each}
    </tbody>
  </table>
  <div class="void"></div>
  <table class="totals" aria-label={`${data.name} totals`}>
    {@render columns(data.cols)}
    <tbody>
      <tr>
        <td></td>
        {#each data.totals as value}
          <td>{#if value}<span>{value}</span>{/if}</td>
        {/each}
      </tr>
    </tbody>
  </table>
{/snippet}

<svg class="defs" aria-hidden="true">
  <defs>
    <linearGradient id="g-paper" x1="0" y1="0" x2="1" y2="1"><stop offset="0" stop-color="#fff" /><stop offset="1" stop-color="#cfe2f7" /></linearGradient>
    <linearGradient id="g-red" x1="0" y1="0" x2="0" y2="1"><stop offset="0" stop-color="#ef4c3f" /><stop offset="1" stop-color="#b81610" /></linearGradient>
    <linearGradient id="g-info" x1="0" y1="0" x2="0" y2="1"><stop offset="0" stop-color="#7cc2ec" /><stop offset="1" stop-color="#1463ab" /></linearGradient>
    <linearGradient id="g-blue" x1="0" y1="0" x2="1" y2="1"><stop offset="0" stop-color="#5cabec" /><stop offset="1" stop-color="#2572c8" /></linearGradient>
    <linearGradient id="g-bed" x1="0" y1="0" x2="0" y2="1"><stop offset="0" stop-color="#a6c9a4" /><stop offset="1" stop-color="#3f8248" /></linearGradient>
    <linearGradient id="g-sky" x1="0" y1="0" x2="1" y2="1"><stop offset="0" stop-color="#d9edfc" /><stop offset="1" stop-color="#4f9ade" /></linearGradient>
    <radialGradient id="g-sun"><stop offset="0" stop-color="#ffd640" /><stop offset="1" stop-color="#f9a80f" /></radialGradient>
  </defs>
</svg>

<div class="window">
  <header>
    <button class="logo" aria-label="Application menu">
      <svg viewBox="0 0 40 40" aria-hidden="true">
        <circle cx="20" cy="20" r="18.500" fill="url(#g-sun)" stroke="#e3822a" stroke-width="1.500" />
        <path d="M9 34c8-4 17-3 22-3-5 7-15 8-22 3z" fill="#ffe23a" />
        <path d="M27 10C17 6 4 9 3.500 19c0 9 13 14 23 11C18 29 9 25 10 19c1-5 9-8 17-9z" fill="#58ad36" />
        <path d="M16 13.500c9-2 20-1 20 5 0 5-8 8-15 8 5-2 8-4 7-7-1-3-6-5-12-6z" fill="#1a57a6" />
      </svg>
    </button>
    <div class="top">
      <div class="quick">
        <button aria-label="Refresh">{@render icon('refresh')}</button>
        <button aria-label="Customize toolbar"><svg class="i8" viewBox="0 0 8 8" aria-hidden="true"><path d="M1 1.500h6" stroke="#555b64" /><path d="M1 4h6L4 7z" fill="#555b64" /></svg></button>
      </div>
      <div class="menu" role="tablist" aria-label="Ribbon">
        <button class="active" role="tab" aria-selected="true">Home</button>
        <button role="tab" aria-selected="false">View</button>
        <button role="tab" aria-selected="false">Tools</button>
      </div>
    </div>
    <h1>175: Family Fun Festival - Event - EventPro</h1>
    <div class="controls">
      <div>
        <button aria-label="Minimize"><svg viewBox="0 0 12 12" aria-hidden="true"><rect x=".5" y="5.500" width="10" height="4" rx="1" /></svg></button>
        <button aria-label="Restore"><svg viewBox="0 0 12 12" aria-hidden="true"><rect x=".5" y="1.500" width="10" height="8" rx="1" /><rect x="3.500" y="4.500" width="4" height="2" /></svg></button>
        <button aria-label="Close window"><svg viewBox="0 0 12 12" aria-hidden="true"><path d="M.5 1.500h3l2 2 2-2h3L7.500 5.500l3 4h-3l-2-2-2 2h-3l3-4z" /></svg></button>
      </div>
      <button aria-label="Collapse ribbon"><svg viewBox="0 0 12 12" aria-hidden="true"><path d="M1.500 6L6 1.500 10.500 6v2h-3L6 6.500 4.500 8h-3z" /></svg></button>
    </div>
  </header>

  <div class="shell">
    <div class="ribbon">
      <section class="g-close"><div>{@render bigButton('close', 'Close')}</div><h2>Close</h2></section>
      <section class="g-new"><div>{@render bigButton('page', 'New', '', true)}</div><h2>Objects Creation</h2></section>
      <section class="g-edit">
        <div>
          {#each editButtons as [glyph, line1, line2, drop, on]}
            {@render bigButton(glyph, line1, line2, drop, on)}
          {/each}
        </div>
        <h2>Edit</h2>
      </section>
      <section class="g-open"><div>{@render bigButton('related', 'Open Related', 'Record', false, false, true)}</div><h2>Open Object</h2></section>
      <section class="g-view">
        <div class="stack">
          {@render smallButton('calItin', 'Itinerary Calendar')}
          {@render smallButton('refresh', 'Refresh')}
          {@render smallButton('audit', 'Audit Log')}
        </div>
        <h2>View</h2>
      </section>
      <section class="g-records">
        <div>
          {@render bigButton('find', 'Find')}
          {@render bigButton('first', 'First', 'Event')}
          <div class="stack">
            {@render smallButton('prev', 'Previous Event')}
            {@render smallButton('next', 'Next Event')}
            {@render smallButton('last', 'Last Event')}
          </div>
        </div>
        <h2>Records Navigation</h2>
      </section>
      <section class="g-reports"><div>{@render bigButton('reports', 'Reports')}</div><h2>Reports</h2></section>
    </div>

    <div class="work">
      <nav>
        <div class="nav-head">
          <span>Navigation</span>
          <button aria-label="Pin panel"><svg viewBox="0 0 9 9" aria-hidden="true"><path d="M2.500 5V.5h4V5M5.500.5V5M1 5.500h7M4.500 5.500V9" /></svg></button>
          <button aria-label="Close panel"><svg viewBox="0 0 9 9" aria-hidden="true"><path d="M1 1l7 7M8 1L1 8" stroke-width="2" /></svg></button>
        </div>
        <h2>Events</h2>
        <ul class="shortcuts">
          {#each shortcuts as [glyph, text]}
            <li><a href="#top" class:on={text === 'Event List'}>{@render icon(glyph)}{text}</a></li>
          {/each}
        </ul>
        <div class="nav-split"></div>
        <ul class="modules">
          {#each modules as [glyph, text]}
            <li><a href="#top" class:on={text === 'Events'}>{@render icon(glyph)}{text}</a></li>
          {/each}
        </ul>
        <button class="more" aria-label="More modules">{@render caret()}</button>
      </nav>

      <main>
        <div class="doc-tabs">
          <div class="doc active">
            {@render icon('pin')}<span>175: Family Fun Festiva</span>
            <button aria-label="Close tab"><svg viewBox="0 0 9 9" aria-hidden="true"><path d="M1 1l7 7M8 1L1 8" stroke-width="2" /></svg></button>
          </div>
          <div class="doc">{@render icon('pin')}<span>173: Family Carnival - E</span></div>
          <button class="doc-menu" aria-label="Open documents">{@render caret()}</button>
        </div>

        <div class="document">
          <section class="event">
            <h2>{@render icon('pin')}Event</h2>
            <div class="form">
              {#each fields as f, i}
                {#if f.label}
                  <label for={`field-${i}`}>{f.label}</label>
                  <input id={`field-${i}`} class={f.tone} value={f.value} readonly />
                {:else}
                  <span></span><span></span>
                {/if}
              {/each}
            </div>
          </section>

          {@render tabs(detailTabs, 'Event Detail', 'Event')}
          <div class="page outer">
            {@render tabs(locationTabs, 'Booked Locations', 'Locations')}
            <div class="page inner">
              {@render toolbar(locationTools, 'search-locations')}
              <div class="frame">
                <div class="grid upper">{@render grid(locations)}</div>
                <div class="splitter"><i></i><i></i><i></i><i></i></div>
                <div class="lower">
                  {@render tabs(setupTabs, 'Setup', 'Location details')}
                  <div class="page inner">
                    {@render toolbar(setupTools, 'search-setup')}
                    <div class="frame">
                      <div class="grid full">{@render grid(setup)}</div>
                    </div>
                  </div>
                </div>
              </div>
            </div>
          </div>
        </div>
      </main>
    </div>

    <footer>
      <span>Client ID: PSI001000AK2</span>
      <span>Memory Usage: 308MB</span>
      <span>Total Users: 1</span>
      <span>Total Concurrent: 0</span>
      <span>User: AliceK_001000</span>
      <svg viewBox="0 0 11 11" aria-hidden="true"><path d="M8 0h2v2H8zM4 4h2v2H4zM8 4h2v2H8zM0 8h2v2H0zM4 8h2v2H4zM8 8h2v2H8z" fill="#8d939c" /></svg>
    </footer>
  </div>
</div>

<style>
  :global(body) { background: #fff; }
  * { box-sizing: border-box; }
  h1, h2, ul { margin: 0; padding: 0; font-size: 11px; font-weight: 400; list-style: none; }
  button, input { font: inherit; color: inherit; margin: 0; padding: 0; border: 0; background: none; border-radius: 0; }
  svg { display: block; flex: none; }
  a { color: inherit; text-decoration: none; }

  .defs { position: absolute; width: 0; height: 0; }
  .i16 { width: 16px; height: 16px; }
  .i32 { width: 32px; height: 32px; }
  .i8 { width: 8px; height: 8px; }
  .caret { width: 5px; height: 3px; color: #4d525b; }

  .window {
    display: flex; flex-direction: column; height: 100vh; min-height: 640px;
    padding: 0 6px 6px; border: 1px solid #69707c; border-radius: 7px;
    background: linear-gradient(#eceef1, #dfe3e6 50px, #e4e7ea);
    font: 11px/13px Tahoma, Roboto, "Noto Sans", sans-serif; color: #3b3f47; white-space: nowrap;
  }

  header { display: flex; height: 50px; flex: none; position: relative; }
  .logo { width: 52px; padding: 0 0 0 2px; }
  .logo svg { width: 40px; height: 40px; }
  .top { flex: 1; display: flex; flex-direction: column; justify-content: space-between; }
  .quick { display: flex; align-items: center; gap: 26px; padding: 6px 0 0 8px; }
  .menu { display: flex; height: 22px; margin-bottom: -1px; }
  .menu button { width: 50px; padding-top: 2px; border: 1px solid transparent; border-bottom: 0; border-radius: 3px 3px 0 0; }
  .menu button.active { background: #fff; border-color: #9aa0aa; }
  h1 { position: absolute; left: 0; right: 0; top: 8px; text-align: center; pointer-events: none; }
  .controls { display: flex; flex-direction: column; align-items: flex-end; padding: 8px 9px 0 0; gap: 14px; }
  .controls div { display: flex; gap: 20px; }
  .controls svg { width: 12px; height: 12px; fill: #fdfdfd; stroke: #555b66; }

  .shell {
    flex: 1; min-height: 0; display: flex; flex-direction: column;
    border: 1px solid #83888f; border-top-color: #aeb2b8; background: #e8ebef;
  }

  .ribbon {
    display: flex; flex: none; height: 89px; border-bottom: 1px solid #83888f;
    background: linear-gradient(#fff, #f4f6f8 45%, #e5e8ec);
  }
  .ribbon section { display: flex; flex: none; flex-direction: column; justify-content: space-between; border-right: 1px solid #b9bdc4; box-shadow: 1px 0 #fbfcfd; }
  .ribbon section > div { display: flex; justify-content: center; height: 72px; padding-top: 3px; }
  .ribbon h2 { height: 16px; line-height: 17px; text-align: center; color: #6b7285; }
  .g-close { min-width: 54px; }
  .g-new { min-width: 95px; }
  .g-edit { min-width: 762px; }
  .ribbon .g-edit > div { justify-content: flex-start; padding-left: 5px; }
  .g-open { min-width: 89px; }
  .g-view { min-width: 132px; }
  .g-records { min-width: 202px; }
  .g-reports { min-width: 61px; }
  .big {
    display: flex; flex: none; flex-direction: column; align-items: center; align-self: flex-start;
    min-width: 43px; height: 69px; padding: 2px 4px 0; border: 1px solid transparent; border-radius: 3px;
  }
  .big .i32 { margin-bottom: 5px; }
  .big.on { border-color: #c58a3c; background: linear-gradient(#f9cf7c, #ffe48c); box-shadow: inset 0 0 2px #d99a3d; }
  .big:disabled { color: #a0a3a8; }
  .second { display: flex; align-items: center; gap: 5px; min-height: 13px; }
  .ribbon section > div.stack, .stack { display: flex; flex-direction: column; justify-content: flex-start; gap: 7px; padding: 6px 8px 0 11px; }
  .g-records .stack { padding: 3px 8px 0 6px; }
  .small { display: flex; align-items: center; gap: 4px; height: 16px; }

  .work { flex: 1; min-height: 0; display: flex; gap: 4px; padding: 5px 2px 2px; }

  nav { width: 164px; flex: none; display: flex; flex-direction: column; border: 1px solid #8e939c; border-radius: 2px; padding: 0 1px; }
  .nav-head { display: flex; align-items: center; gap: 10px; height: 22px; padding: 0 5px 0 3px; color: #6d727c; }
  .nav-head span { flex: 1; }
  .nav-head svg, .doc button svg { width: 9px; height: 9px; fill: none; stroke: #4d525b; }
  nav h2, .modules { font-family: "DejaVu Sans Condensed", "Noto Sans", sans-serif; font-weight: 700; }
  nav h2 { padding: 10px 10px 8px; }
  .shortcuts { display: flex; flex-direction: column; flex: none; height: 156px; }
  .shortcuts a { display: flex; align-items: center; gap: 5px; height: 22px; padding: 0 7px; margin: 0 1px; border: 1px solid transparent; border-radius: 2px; }
  .shortcuts .on { border-color: #c58332; background: linear-gradient(#ffdd80, #ffe38e); }
  .nav-split { height: 5px; flex: none; border: 1px solid #a3a9b2; background: #eef0f3; }
  .modules { padding-top: 1px; }
  .modules li { padding: 2px 1px 2px 2px; }
  .modules a { display: flex; align-items: center; gap: 6px; height: 28px; padding: 0 8px; border: 1px solid transparent; }
  .modules .on { border-color: #9ba2ad; background: radial-gradient(ellipse at center, #ccd2da, #dde1e6); }
  .more { align-self: flex-end; margin: auto 13px 15px 0; }
  .more .caret, .doc-menu .caret { width: 7px; height: 4px; }

  main { flex: 1; min-width: 0; display: flex; flex-direction: column; }
  .doc-tabs { display: flex; align-items: flex-end; height: 26px; flex: none; margin-bottom: -1px; padding-left: 3px; z-index: 1; }
  .doc { display: flex; align-items: center; gap: 3px; width: 166px; height: 24px; padding: 0 8px; border: 1px solid #9ea4ae; background: linear-gradient(#d9dce0, #cdd1d6); }
  .doc span { flex: 1; overflow: hidden; }
  .doc.active { height: 26px; width: 168px; margin-right: -1px; padding-right: 6px; border-bottom: 0; background: #e8ebef; color: #22252b; }
  .doc-menu { margin-left: auto; align-self: center; padding: 0 9px; }
  .document { flex: 1; min-height: 0; display: flex; flex-direction: column; border: 1px solid #a4a9b3; padding: 10px 9px 4px 5px; }

  .event { flex: none; height: 86px; margin: 0 1px 6px 5px; border: 1px solid #b2b6bd; border-radius: 2px; }
  .event h2 { display: flex; align-items: center; gap: 4px; height: 22px; padding: 1px 0 0 12px; border-bottom: 1px solid #ced2d7; background: linear-gradient(#dbdee3, #e2e5e9); }
  .form {
    display: grid; row-gap: 2px; padding: 10px 10px 0 0;
    grid-template-columns: 53px 105fr 77px 168fr 92px 182fr 95px 185fr 68px 168fr;
  }
  .form label { padding: 1px 0 0 9px; line-height: 19px; }
  .form input { min-width: 0; width: 100%; height: 20px; padding: 1px 2px 0; border: 1px solid #a4aab6; color: #000; }
  .form .num { text-align: right; padding-right: 3px; }

  .orange { background: #ffa500; }
  .yellow { background: #ffff00; }
  .green { background: #32cd32; }
  .form .teal { background: #2e8b57; color: #fff; }

  .tabs { display: flex; align-items: flex-end; height: 26px; flex: none; margin-bottom: -1px; padding-left: 3px; position: relative; }
  .tab { display: flex; align-items: center; gap: 2px; height: 24px; padding: 0 7px 0 6px; border: 1px solid #a0a6b1; background: linear-gradient(#dadde1, #cbd0d5); }
  .tab.active { height: 26px; padding: 0 8px 1px; border-bottom: 0; background: #fff; }
  .inner .tab { gap: 3px; }

  .page { flex: 1; min-height: 0; display: flex; flex-direction: column; background: #fff; border: 1px solid #a0a6b1; box-shadow: 2px 2px 2px #c9cdd3; }
  .outer { padding: 5px 9px 4px 5px; }
  .inner { padding: 0 2px 2px; }
  .inner .tabs { padding-left: 4px; }

  .toolbar { display: flex; align-items: center; flex: none; height: 31px; padding: 1px 5px 0 2px; background: linear-gradient(#fff, #f5f6f8 60%, #e7eaed); border-bottom: 1px solid #aeb2b9; }
  .tool { display: flex; justify-content: center; width: 26px; }
  .drop { display: flex; justify-content: center; width: 11px; }
  .drop.narrow { width: 7px; justify-content: flex-start; }
  .sep { width: 1px; height: 20px; margin: 0 3px; background: linear-gradient(#e6e8eb, #b9bdc4, #e6e8eb); }
  .push { margin-left: auto; margin-right: 7px; }
  .search { display: flex; height: 20px; border: 1px solid #a4aab6; background: #fff; }
  .search input { width: 108px; padding: 0 3px; }
  .search input::placeholder { color: #969696; opacity: 1; }
  .search button { width: 40px; border-left: 1px solid #a4aab6; background: #eef1f4; color: #55595f; }

  .frame { flex: 1; min-height: 0; display: flex; flex-direction: column; border: 1px solid #a9aeb8; padding: 1px; background: #e8ebef; }
  .grid { display: flex; flex-direction: column; border: 1px solid #a0a6b1; background: #fff; }
  .upper { height: 173px; flex: none; }
  .full { flex: 1; min-height: 0; }
  .splitter { display: flex; justify-content: center; gap: 2px; height: 11px; flex: none; padding-top: 2px; }
  .splitter i { width: 2px; height: 2px; background: #9298a2; }
  .lower { flex: 1; min-height: 0; display: flex; flex-direction: column; padding: 0 9px 4px 5px; }

  table { width: 100%; table-layout: fixed; border-collapse: separate; border-spacing: 0; }
  .marker { width: 16px; }
  th { height: 19px; padding: 0 3px; border-right: 1px solid #a0a6b1; border-bottom: 1px solid #a0a6b1; background: linear-gradient(#f6f8fa, #ebeef3); font-weight: 400; text-align: left; }
  .upper th { height: 32px; white-space: pre; }
  .upper thead .head { min-height: 26px; }
  .head { display: flex; align-items: center; justify-content: space-between; }
  .sort { width: 7px; height: 4px; margin-right: 12px; fill: #111; }
  td { height: 21px; padding: 0 3px; overflow: hidden; border-right: 1px solid #d6d9de; border-bottom: 1px solid #d6d9de; background: #f1f5fb; color: #000; }
  tbody tr:first-child td { background: #ebecee; }
  tbody tr:nth-child(3) td { background: #fbfbf3; }
  .num { text-align: right; }
  tbody tr td.lavender { background: #e4e4fa; }
  tbody tr td.yellow { background: #ffff00; }
  tbody tr td.green { background: #32cd32; color: #fff; }
  tbody tr td.mark { padding: 0 0 0 6px; border-color: #a0a6b1; background: #f5f6f9; }
  .mark svg { width: 4px; height: 8px; fill: #7b818b; }
  th:last-child, td:last-child { border-right: 0; }
  .void { flex: 1; }
  .totals { border-top: 1px solid #a0a6b1; background: linear-gradient(#f7f8fa, #eceff3); }
  .totals tbody tr td { height: 22px; padding: 0; border: 0; background: none; color: #3b3f47; text-align: right; }
  .totals span { display: block; line-height: 15px; padding-right: 4px; margin-right: 1px; border-right: 1px solid #a0a6b1; }
  .totals td:last-child span { margin-right: 3px; }

  footer { display: flex; align-items: center; gap: 9px; flex: none; height: 25px; padding: 0 3px 0 5px; border-top: 1px solid #8b9099; background: linear-gradient(#e4e6ea, #bfc3c8); }
  footer svg { width: 11px; height: 11px; margin: 8px 0 0 auto; }
</style>
